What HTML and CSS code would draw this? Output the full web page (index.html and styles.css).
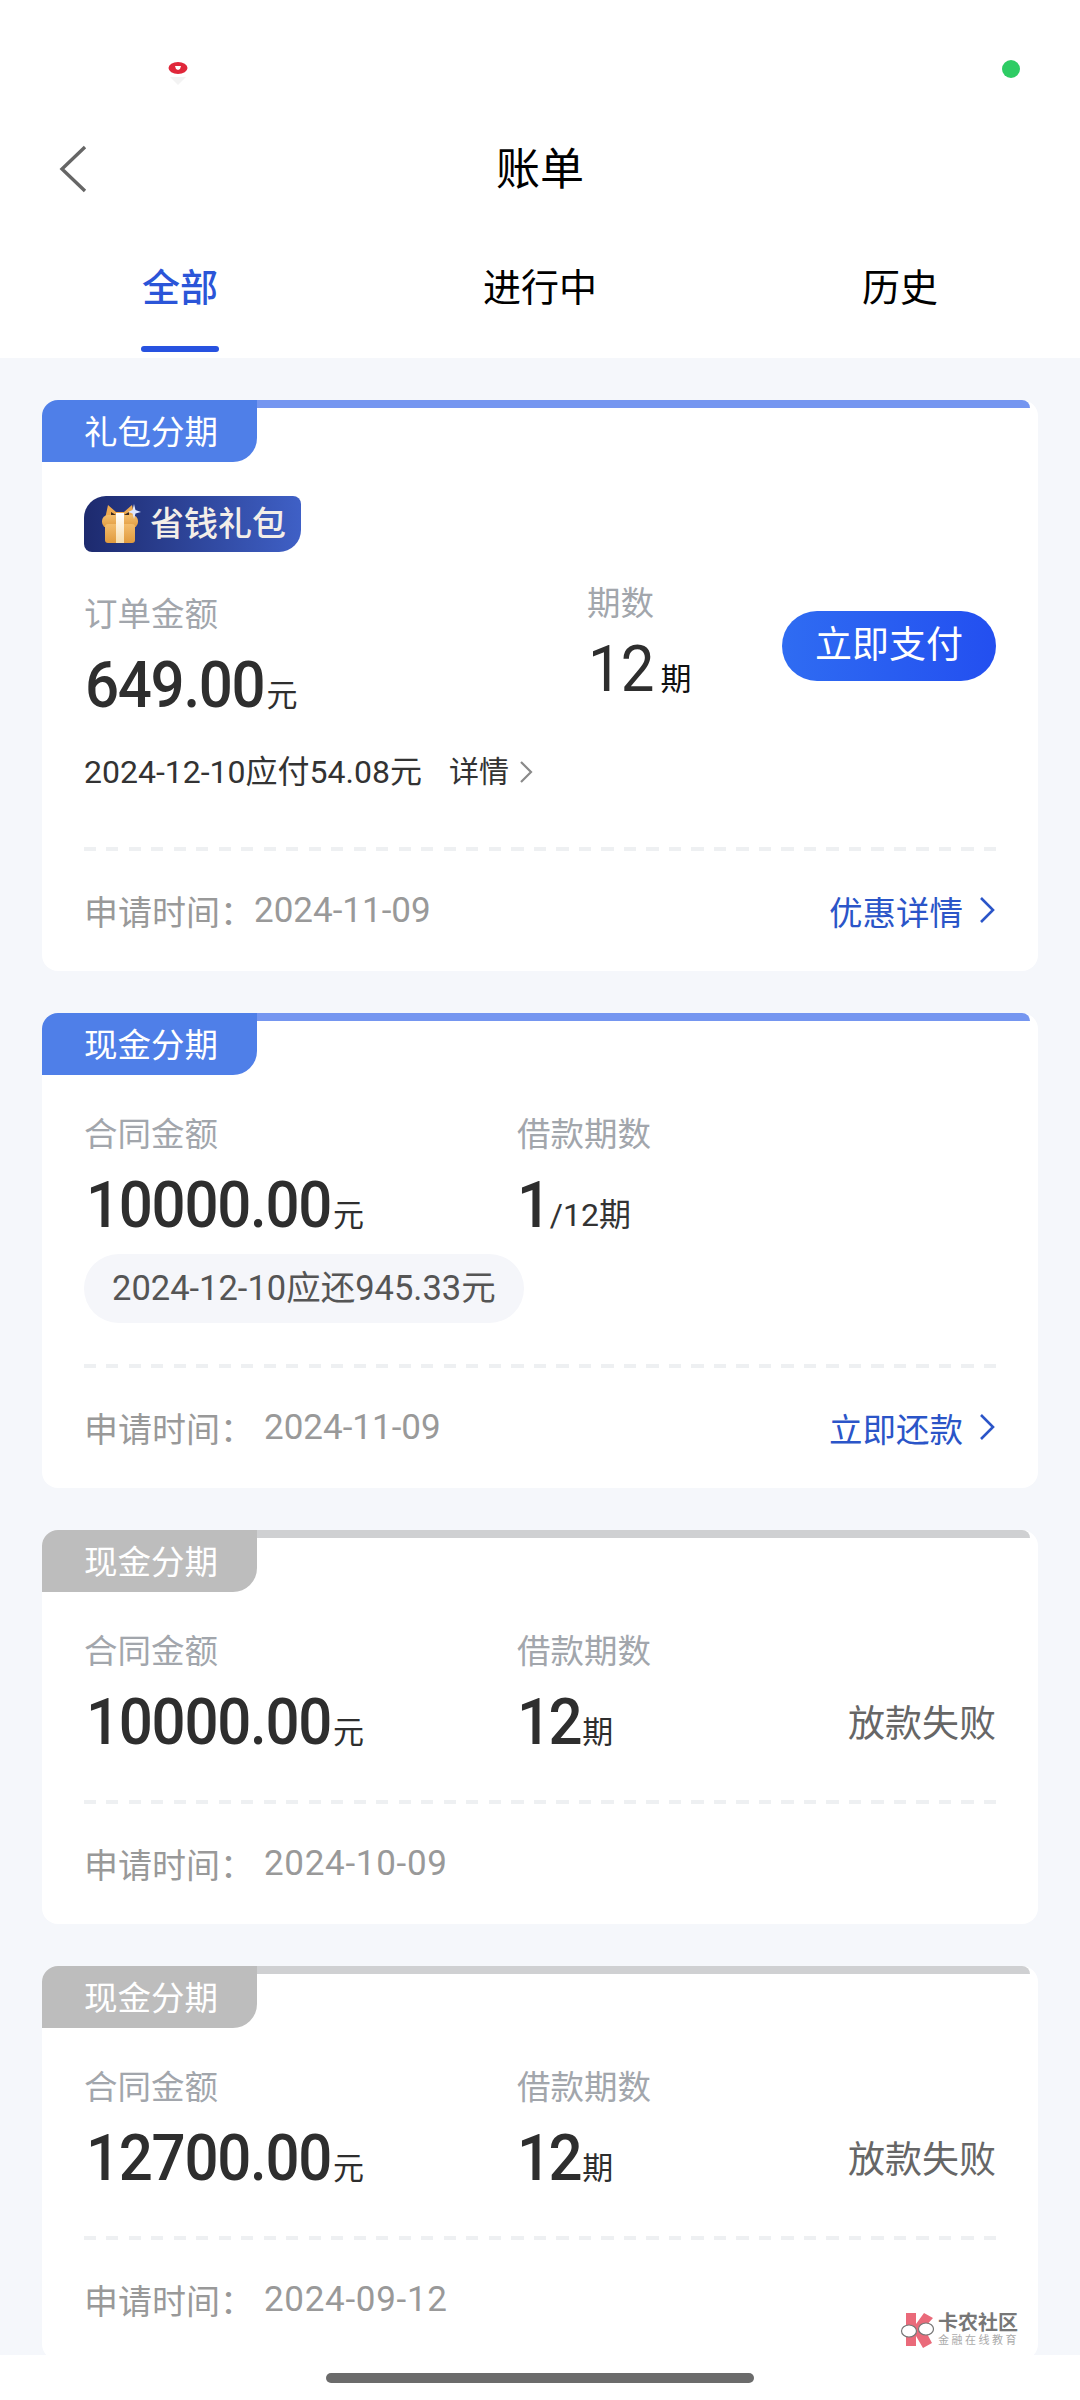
FILE: index.html
```html
<!DOCTYPE html>
<html lang="zh-CN">
<head>
<meta charset="utf-8">
<title>账单</title>
<link rel="stylesheet" href="styles.css">
</head>
<body>
<div class="app">
  <div class="status">
    <svg class="status-app" viewBox="0 0 20 24" width="20" height="24">
      <path d="M2 15 L10 23 L18 15 Z" fill="#f3f3f3"/>
      <ellipse cx="10" cy="6" rx="9.5" ry="6" fill="#e0273a"/>
      <path d="M7 4 H13 L12 7 L10 8 L8 7 Z" fill="#fff"/>
    </svg>
    <span class="status-dot"></span>
  </div>
  <header class="nav">
    <svg class="back" viewBox="0 0 28 48" width="28" height="48">
      <polyline points="26,2 3,24 26,46" fill="none" stroke="#666" stroke-width="3.4"/>
    </svg>
    <h1 class="title">账单</h1>
  </header>
  <nav class="tabs">
    <div class="tab active"><span class="tab-text">全部</span><span class="tab-line"></span></div>
    <div class="tab"><span class="tab-text">进行中</span></div>
    <div class="tab"><span class="tab-text">历史</span></div>
  </nav>

  <main class="list">
    <article class="card">
      <div class="card-head">
        <div class="tag">礼包分期</div>
        <div class="stripe"></div>
      </div>
      <div class="card-body">
        <div class="badge">
          <svg class="gift" viewBox="0 0 36 40" width="36" height="40">
            <defs>
              <linearGradient id="box" x1="0" y1="0" x2="0" y2="1">
                <stop offset="0" stop-color="#f3bd6c"/>
                <stop offset="1" stop-color="#e09a3e"/>
              </linearGradient>
              <linearGradient id="ribbon" x1="0" y1="0" x2="0" y2="1">
                <stop offset="0" stop-color="#ffffff"/>
                <stop offset="1" stop-color="#f8dca8"/>
              </linearGradient>
            </defs>
            <path d="M6 1 L14 8 H22 L30 1 L33 15 H3 Z" fill="#eeaa50"/>
            <path d="M9 8 L14 11 L9 12 Z M27 8 L22 11 L27 12 Z" fill="#3a2a20"/>
            <rect x="0" y="11" width="36" height="13" rx="6" fill="url(#box)"/>
            <rect x="3" y="20" width="30" height="19" rx="3" fill="url(#box)"/>
            <rect x="14" y="9" width="8" height="30" fill="url(#ribbon)"/>
            <path d="M32 0 L33.5 6 L39 8 L33.5 9.5 L32 15 L30.5 9.5 L26 8 L30.5 6 Z" fill="#dfe7ff"/>
          </svg>
          <span class="badge-text">省钱礼包</span>
        </div>
        <div class="stats stats-gift">
          <div class="col col-wide">
            <div class="label">订单金额</div>
            <div class="value value-first"><span class="num">649.00</span><span class="unit">元</span></div>
          </div>
          <div class="col col-terms">
            <div class="label">期数</div>
            <div class="value value-terms"><span class="num num-light">12</span><span class="unit unit-gap">期</span></div>
          </div>
          <button class="pay">立即支付</button>
        </div>
        <div class="due-line">
          <span class="due-text">2024-12-10应付54.08元</span>
          <span class="due-more">详情</span>
          <svg class="due-chevron" viewBox="0 0 14 24" width="14" height="24">
            <polyline points="2,2 12,12 2,22" fill="none" stroke="#8a8a8a" stroke-width="2.2"/>
          </svg>
        </div>
        <div class="divider divider-gift"></div>
        <div class="foot">
          <span class="foot-label">申请时间：</span><span class="foot-date foot-date-near">2024-11-09</span>
          <a class="foot-link">优惠详情
            <svg class="link-chevron" viewBox="0 0 18 28" width="18" height="28">
              <polyline points="3,2 15,14 3,26" fill="none" stroke="#2b55c8" stroke-width="2.6"/>
            </svg>
          </a>
        </div>
      </div>
    </article>

    <article class="card">
      <div class="card-head">
        <div class="tag">现金分期</div>
        <div class="stripe"></div>
      </div>
      <div class="card-body body-plain">
        <div class="stats">
          <div class="col col-main">
            <div class="label">合同金额</div>
            <div class="value"><span class="num">10000.00</span><span class="unit">元</span></div>
          </div>
          <div class="col">
            <div class="label">借款期数</div>
            <div class="value value-count"><span class="num">1</span><span class="unit-fraction">/12期</span></div>
          </div>
        </div>
        <div class="due-pill">2024-12-10应还945.33元</div>
        <div class="divider divider-pill"></div>
        <div class="foot">
          <span class="foot-label">申请时间：</span><span class="foot-date">2024-11-09</span>
          <a class="foot-link">立即还款
            <svg class="link-chevron" viewBox="0 0 18 28" width="18" height="28">
              <polyline points="3,2 15,14 3,26" fill="none" stroke="#2b55c8" stroke-width="2.6"/>
            </svg>
          </a>
        </div>
      </div>
    </article>

    <article class="card card-off">
      <div class="card-head">
        <div class="tag">现金分期</div>
        <div class="stripe"></div>
      </div>
      <div class="card-body body-plain">
        <div class="stats">
          <div class="col col-main">
            <div class="label">合同金额</div>
            <div class="value"><span class="num">10000.00</span><span class="unit">元</span></div>
          </div>
          <div class="col">
            <div class="label">借款期数</div>
            <div class="value value-count"><span class="num num-tight">12</span><span class="unit">期</span></div>
          </div>
          <div class="result">放款失败</div>
        </div>
        <div class="divider"></div>
        <div class="foot">
          <span class="foot-label">申请时间：</span><span class="foot-date">2024-10-09</span>
        </div>
      </div>
    </article>

    <article class="card card-off">
      <div class="card-head">
        <div class="tag">现金分期</div>
        <div class="stripe"></div>
      </div>
      <div class="card-body body-plain">
        <div class="stats">
          <div class="col col-main">
            <div class="label">合同金额</div>
            <div class="value"><span class="num">12700.00</span><span class="unit">元</span></div>
          </div>
          <div class="col">
            <div class="label">借款期数</div>
            <div class="value value-count"><span class="num num-tight">12</span><span class="unit">期</span></div>
          </div>
          <div class="result">放款失败</div>
        </div>
        <div class="divider"></div>
        <div class="foot">
          <span class="foot-label">申请时间：</span><span class="foot-date">2024-09-12</span>
        </div>
      </div>
    </article>
  </main>

  <footer class="home"><span class="home-bar"></span></footer>

  <div class="watermark">
    <svg class="wm-logo" viewBox="0 0 34 36" width="34" height="36">
      <path d="M6 1 H16 V12 L24 1 L33 6 L24 16 L32 31 L23 36 L16 24 V34 H6 Z" fill="#ea6a7a"/>
      <ellipse cx="9" cy="19" rx="7.5" ry="6" fill="#fff" stroke="#777" stroke-width="1.2"/>
      <ellipse cx="26" cy="17" rx="7.5" ry="6" fill="#fff" stroke="#777" stroke-width="1.2"/>
    </svg>
    <div class="wm-text">
      <div class="wm-name">卡农社区</div>
      <div class="wm-sub">金融在线教育</div>
    </div>
  </div>
</div>
</body>
</html>
```
FILE: styles.css
```css
* { box-sizing: border-box; }
html, body { margin: 0; padding: 0; background: #fff; }
body { font-family: Roboto, "Noto Sans CJK SC", sans-serif; color: #333; }

.app {
  position: relative;
  width: 1080px;
  height: 2400px;
  display: flex;
  flex-direction: column;
  overflow: hidden;
  background: #fff;
}

/* status */
.status {
  height: 136px;
  flex: none;
  display: flex;
  justify-content: space-between;
  align-items: flex-start;
  padding: 60px 60px 0 168px;
}
.status-app { margin-top: 2px; display: block; }
.status-dot { width: 18px; height: 18px; border-radius: 50%; background: #2ecc64; }

/* nav */
.nav {
  height: 66px;
  flex: none;
  display: flex;
  align-items: center;
  justify-content: center;
  position: relative;
}
.back { position: absolute; left: 59px; top: 9px; }
.title { margin: 0; height: 66px; font-size: 44px; line-height: 69px; font-weight: 400; color: #000; }

/* tabs */
.tabs {
  height: 156px;
  flex: none;
  display: grid;
  grid-template-columns: repeat(3, 1fr);
}
.tab {
  display: flex;
  flex-direction: column;
  align-items: center;
  padding-top: 56px;
}
.tab-text { height: 56px; font-size: 38px; line-height: 60px; color: #000; }
.tab.active .tab-text { color: #2b55d8; font-weight: 500; }
.tab-line {
  width: 78px;
  height: 6px;
  margin-top: 32px;
  border-radius: 3px;
  background: #2752e0;
}

/* list */
.list {
  flex: 1;
  min-height: 0;
  overflow: hidden;
  background: #f5f7fb;
  padding: 42px 42px 0;
  display: flex;
  flex-direction: column;
  gap: 42px;
}
.card {
  flex: none;
  background: #fff;
  border-radius: 16px;
}
.card-head { display: flex; align-items: flex-start; height: 62px; }
.tag {
  width: 215px;
  height: 62px;
  padding-left: 42px;
  font-size: 33.5px;
  line-height: 65px;
  color: #fff;
  background: #4f7fe8;
  border-radius: 16px 0 24px 0;
}
.stripe {
  flex: 1;
  height: 8px;
  margin-right: 8px;
  background: #7596f0;
  border-radius: 0 12px 0 0;
}
.card-off .tag { background: #bdbdbd; }
.card-off .stripe { background: #cfd0d2; }

.card-body { padding: 0 42px; }
.body-plain { padding-top: 36px; }

/* badge */
.badge {
  width: 217px;
  height: 56px;
  margin-top: 34px;
  display: flex;
  align-items: center;
  padding-left: 18px;
  border-radius: 22px 8px 22px 8px;
  background: linear-gradient(90deg, #1d2a6e 0%, #3f60c6 100%);
}
.gift { flex: none; overflow: visible; }
.badge-text {
  margin-left: 12px;
  font-size: 34px;
  line-height: 56px;
  font-weight: 500;
  color: #f3eee8;
}

/* stats */
.stats { display: flex; align-items: flex-start; }
.stats-gift { margin-top: 39px; }
.col-main { width: 433px; }
.col-wide { width: 503px; }
.col-terms { margin-top: -11px; }
.label { height: 44px; font-size: 33.5px; line-height: 47px; color: #a2a6ac; white-space: nowrap; }
.value {
  margin-top: 15px;
  height: 71px;
  line-height: 72px;
  white-space: nowrap;
  padding-left: 2px;
}
.value-first { padding-left: 1px; }
.value-terms { margin-top: 10px; padding-left: 1px; }
.value-count { padding-left: 0; }
.num {
  display: inline-block;
  font-size: 60px;
  font-weight: 500;
  letter-spacing: -1.3px;
  color: #2e2e2e;
  transform: scaleY(1.07);
}
.num-light { font-weight: 400; letter-spacing: -1px; }
.num-tight { letter-spacing: -2.5px; }
.unit { font-size: 31px; margin-left: 2px; color: #2e2e2e; }
.unit-gap { margin-left: 7px; color: #111; }
.unit-fraction { font-size: 32px; margin-left: 0; color: #333; }
.pay {
  margin: 20px 0 0 auto;
  width: 214px;
  height: 70px;
  padding: 0;
  border: 0;
  border-radius: 35px;
  font-family: inherit;
  font-size: 37px;
  line-height: 70px;
  color: #fff;
  background: linear-gradient(90deg, #2f6cf2 0%, #234ff0 100%);
}
.result {
  margin: 67px 0 0 auto;
  font-size: 37px;
  line-height: 60px;
  color: #666;
  white-space: nowrap;
}

/* due line */
.due-line {
  margin-top: 29px;
  height: 44px;
  display: flex;
  align-items: center;
}
.due-text { font-size: 32px; line-height: 44px; color: #333; }
.due-more { margin-left: 27px; font-size: 30px; line-height: 44px; color: #333; }
.due-chevron { margin-left: 10px; }

.due-pill {
  display: inline-block;
  vertical-align: top;
  margin-top: 13px;
  height: 69px;
  padding: 0 28px;
  border-radius: 35px;
  font-size: 34.5px;
  line-height: 69px;
  color: #555;
  background: #f5f6fa;
}

/* divider + footer */
.divider {
  height: 4px;
  margin-top: 42px;
  background: repeating-linear-gradient(90deg, #eef0f2 0 12px, transparent 12px 22.5px);
}
.divider-gift { margin-top: 53px; }
.divider-pill { margin-top: 41px; }
.foot {
  height: 120px;
  padding-bottom: 2px;
  display: flex;
  align-items: center;
}
.foot-label { font-size: 34px; color: #999; }
.foot-date { margin-left: 10px; font-size: 35px; color: #999; }
.foot-date-near { margin-left: 0; }
.card-off .foot-date { letter-spacing: 0.7px; }
.foot-link {
  margin-left: auto;
  display: flex;
  align-items: center;
  font-size: 33.5px;
  color: #2b55c8;
}
.link-chevron { margin-left: 15px; }

/* home indicator */
.home {
  height: 45px;
  flex: none;
  display: flex;
  justify-content: center;
  padding-top: 18px;
  background: #fff;
}
.home-bar { width: 428px; height: 10px; border-radius: 5px; background: #6b6b6b; }

/* watermark */
.watermark {
  position: absolute;
  left: 900px;
  top: 2312px;
  display: flex;
  align-items: flex-start;
  gap: 4px;
}
.wm-logo { flex: none; }
.wm-name { font-size: 20px; line-height: 22px; font-weight: 700; color: #777; white-space: nowrap; }
.wm-sub { font-size: 11px; line-height: 14px; letter-spacing: 2.5px; color: #aaa; white-space: nowrap; }
```
